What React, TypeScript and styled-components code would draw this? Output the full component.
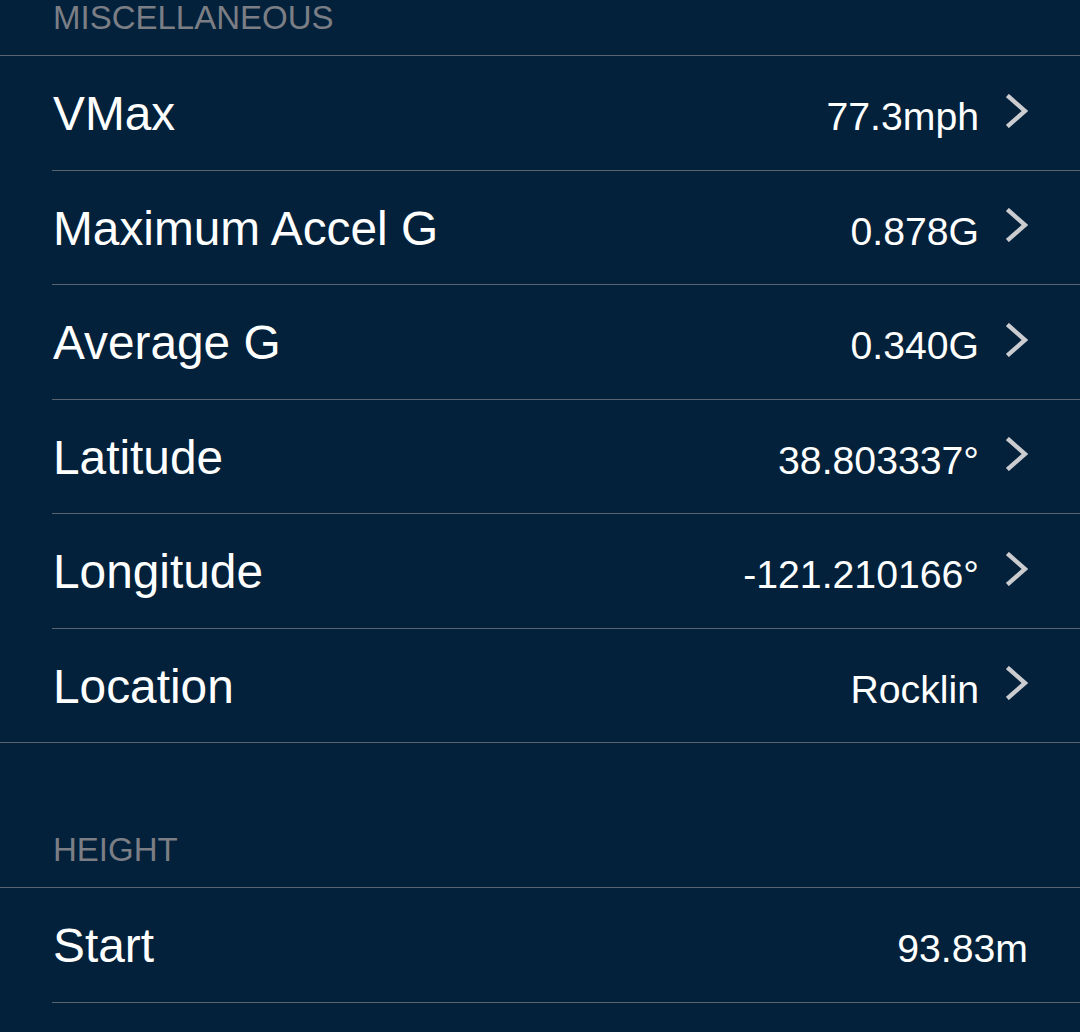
import styled, { createGlobalStyle } from 'styled-components'

type Item = {
  label: string
  value: string
  link?: boolean
}

const miscellaneous: Item[] = [
  { label: 'VMax', value: '77.3mph', link: true },
  { label: 'Maximum Accel G', value: '0.878G', link: true },
  { label: 'Average G', value: '0.340G', link: true },
  { label: 'Latitude', value: '38.803337°', link: true },
  { label: 'Longitude', value: '-121.210166°', link: true },
  { label: 'Location', value: 'Rocklin', link: true },
]

const height: Item[] = [{ label: 'Start', value: '93.83m' }]

function Chevron() {
  return (
    <ChevronIcon viewBox="0 0 22 34" aria-hidden="true">
      <polyline points="3,3 19,17 3,31" />
    </ChevronIcon>
  )
}

function Section({
  title,
  items,
  headerHeight,
  open,
}: {
  title: string
  items: Item[]
  headerHeight: number
  open?: boolean
}) {
  return (
    <>
      <SectionHeader $height={headerHeight}>{title}</SectionHeader>
      <Group $open={open}>
        {items.map((item) => (
          <Row key={item.label}>
            <Line>
              <Label>{item.label}</Label>
              <Value>{item.value}</Value>
            </Line>
            {item.link && <Chevron />}
          </Row>
        ))}
      </Group>
    </>
  )
}

export default function App() {
  return (
    <>
      <GlobalStyle />
      <Screen>
        <Section title="MISCELLANEOUS" items={miscellaneous} headerHeight={55} />
        <Section title="HEIGHT" items={height} headerHeight={144} open />
      </Screen>
    </>
  )
}

const GlobalStyle = createGlobalStyle`
  html, body {
    margin: 0;
    background: #03213a;
  }

  body {
    font-family: 'Liberation Sans', Arial, sans-serif;
    -webkit-font-smoothing: antialiased;
  }
`

const Screen = styled.div`
  height: 1032px;
  overflow: hidden;
  background: #03213a;
`

const SectionHeader = styled.div<{ $height: number }>`
  box-sizing: border-box;
  height: ${(p) => p.$height}px;
  display: flex;
  align-items: flex-end;
  padding: 0 0 21px 53px;
  color: #7c7e85;
  font-size: 33px;
  line-height: 33px;
`

// separators: full width around a group, inset between its rows
const Group = styled.div<{ $open?: boolean }>`
  border-top: 1px solid #5a6370;
  border-bottom: ${(p) => (p.$open ? 'none' : '1px solid #5a6370')};

  & > div:last-child {
    border-bottom: ${(p) => (p.$open ? '1px solid #5a6370' : 'none')};
  }
`

const Row = styled.div`
  display: flex;
  align-items: center;
  height: 113.5px;
  margin-left: 52px;
  padding-right: 52px;
  border-bottom: 1px solid #5a6370;
`

const Line = styled.div`
  flex: 1;
  display: flex;
  align-items: baseline;
  padding-top: 6px;
  padding-left: 1px;
`

const Label = styled.span`
  flex: 1;
  color: #ffffff;
  font-size: 47.8px;
  line-height: 56px;
  white-space: nowrap;
`

const Value = styled.span`
  color: #ffffff;
  font-size: 39.2px;
  line-height: 56px;
  white-space: nowrap;
`

const ChevronIcon = styled.svg`
  flex: none;
  width: 22px;
  height: 34px;
  margin-left: 27px;
  margin-top: -4px;
  fill: none;
  stroke: #cbccd0;
  stroke-width: 4.4;
  stroke-linecap: square;
  stroke-linejoin: miter;
`
